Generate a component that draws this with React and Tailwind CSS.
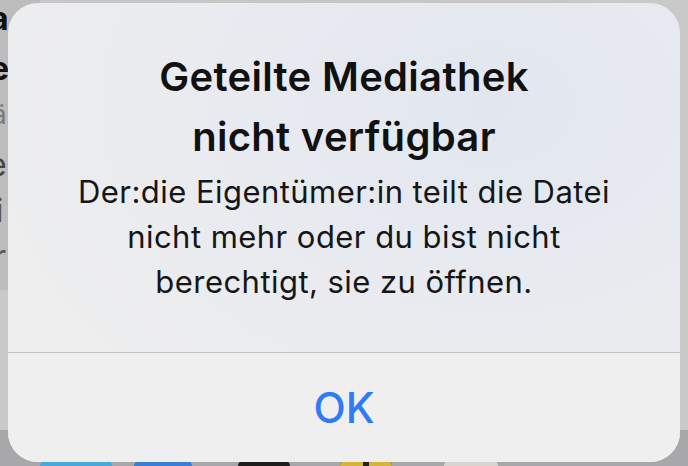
import React from 'react';

function Backdrop() {
  return (
    <div className="h-full w-full flex flex-col bg-[#c6c6c6]">
      <div className="h-[290px] flex">
        <div className="w-[40px] bg-[#bcbcbc] flex flex-col text-[32px] leading-[46px] font-['Inter',sans-serif] overflow-hidden">
          <span className="-ml-[10px] -mt-[4px] font-bold text-[#111]">a</span>
          <span className="-ml-[10px] mt-[4px] font-bold text-[#111]">e</span>
          <span className="-ml-[8px] text-[#7a7a7a] text-[26px]">ä</span>
          <span className="-ml-[12px] mt-[4px] text-[#444]">ei</span>
          <span className="-ml-[12px] text-[#555]">li</span>
          <span className="-ml-[6px] text-[#555]">r</span>
        </div>
        <div className="flex-1" />
        <div className="w-[120px] bg-[#c9c9c9]" />
      </div>
      <div className="flex-1 flex">
        <div className="flex-1 bg-[#c9c9c9]" />
      </div>
      <div className="h-[36px] bg-[#a8a8ab] flex items-end">
        <div className="ml-[40px] w-[72px] h-[6px] rounded-t-full bg-[#4ba6d9]" />
        <div className="ml-[22px] w-[58px] h-[6px] rounded-t-full bg-[#3a7fd6]" />
        <div className="ml-[46px] w-[52px] h-[6px] rounded-t-full bg-[#1e1e1e]" />
        <div className="ml-[50px] w-[52px] h-[6px] rounded-t-full bg-[#222] flex overflow-hidden">
          <div className="flex-1 bg-[#d6b43c]" />
          <div className="w-[6px]" />
          <div className="flex-1 bg-[#d6b43c]" />
        </div>
        <div className="ml-[52px] w-[54px] h-[6px] rounded-t-full bg-[#d9d4cf]" />
      </div>
    </div>
  );
}

export default function App() {
  return (
    <div className="relative w-[688px] h-[466px] overflow-hidden font-['Inter','Noto_Sans',sans-serif]">
      <Backdrop />
      <div className="absolute left-[8px] top-[3px] w-[672px] h-[459px] rounded-[30px] overflow-hidden flex flex-col bg-[radial-gradient(ellipse_at_72%_22%,#e2e7ef_0%,#e9ebef_45%,#eeeeee_80%)]">
        <div className="h-[349px] flex flex-col items-center pt-[44px] px-[40px] text-center">
          <h1 className="text-[40px] leading-[60px] font-semibold text-[#111] tracking-[0.3px]">
            Geteilte Mediathek
            <br />
            nicht verfügbar
          </h1>
          <p className="mt-[2px] text-[31px] leading-[45px] text-[#161616] tracking-[0.45px]">
            Der:die Eigentümer:in teilt die Datei
            <br />
            nicht mehr oder du bist nicht
            <br />
            berechtigt, sie zu öffnen.
          </p>
        </div>
        <div className="h-px bg-[#c3c3c5]" />
        <button className="flex-1 flex items-center justify-center text-[42px] font-medium text-[#2f7bf5] bg-[#efefef]">
          OK
        </button>
      </div>
    </div>
  );
}
